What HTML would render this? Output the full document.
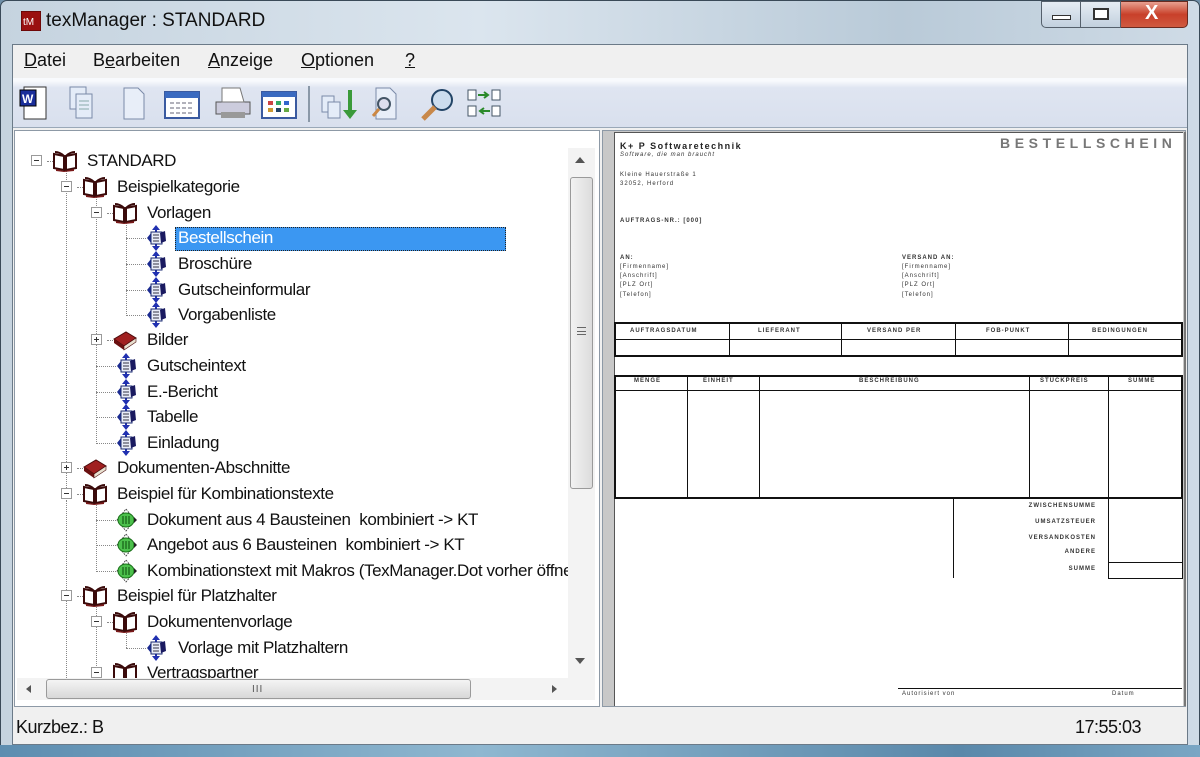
<!DOCTYPE html>
<html><head><meta charset="utf-8">
<style>
*{margin:0;padding:0;box-sizing:border-box}
body{width:1200px;height:757px;overflow:hidden;background:#6f8fa8;font-family:"Liberation Sans",sans-serif;position:relative}
.abs{position:absolute}
#frame{left:0;top:0;width:1200px;height:757px;background:linear-gradient(90deg,#c5d3df 0%,#dbe5ee 40%,#b9cad8 75%,#cfdbe6 100%);border:1px solid #3a4a58;border-radius:7px 7px 0 0}
#title{left:46px;top:10px;font-size:19px;color:#111}
#client{left:12px;top:44px;width:1176px;height:701px;background:#f0f0f0;border:1px solid #6b7a88}
.menu{top:50px;font-size:18px;color:#111}
#tb{left:13px;top:78px;width:1174px;height:50px;background:linear-gradient(#f8fafd 0,#f8fafd 6%,#dfe5f1 20%,#d9e0ee 100%);border-bottom:1px solid #9aa8b8}
#left{left:14px;top:130px;width:586px;height:577px;background:#fff;border:1px solid #8d99a6}
#right{left:602px;top:130px;width:584px;height:577px;background:#c8c8c8;border:1px solid #8d99a6}
#page{left:614px;top:132px;width:569px;height:574px;background:#fff;border-left:1px solid #555;border-top:1px solid #555}
.row{position:absolute;font-size:17px;color:#111;white-space:nowrap;letter-spacing:-0.4px;line-height:20px}
.box{position:absolute;width:11px;height:11px;border:1px solid #9a9a9a;background:#fff}
.box:before{content:"";position:absolute;left:2px;top:4px;width:5px;height:1px;background:#333}
.plus:after{content:"";position:absolute;left:4px;top:2px;width:1px;height:5px;background:#333}
.hl{position:absolute;height:0;border-top:1px dotted #888}
.vl{position:absolute;width:0;border-left:1px dotted #888}
.t{position:absolute;font-size:6px;color:#333;letter-spacing:1px;white-space:nowrap;font-weight:bold}
.ln{position:absolute;background:#111}
</style></head><body>
<svg width="0" height="0" style="position:absolute">
<defs>
<symbol id="book" viewBox="0 0 26 22"><path d="M2 4 L12 6 L12 20 L2 18Z M24 4 L14 6 L14 20 L24 18Z" fill="#fff" stroke="#3a0a0a" stroke-width="2"/><path d="M4 19 L12 21 L22 19 L22 21 L12 22 L4 21Z" fill="#7a1a1a"/><path d="M3 2 Q8 2 12 6 M23 2 Q18 2 14 6" stroke="#3a0a0a" stroke-width="2" fill="none"/></symbol>
<symbol id="cbook" viewBox="0 0 26 22"><path d="M2 10 L14 3 L24 9 L12 17Z" fill="#a02020" stroke="#4a0a0a"/><path d="M2 10 L12 17 L12 21 L2 14Z" fill="#6a1010"/><path d="M12 17 L24 9 L24 13 L12 21Z" fill="#e8e0d0" stroke="#4a0a0a" stroke-width=".6"/></symbol>
<symbol id="doc" viewBox="0 0 26 26"><path d="M13 0 L17 5 L9 5Z M13 26 L17 21 L9 21Z" fill="#2030b0"/><rect x="12" y="3" width="2" height="20" fill="#2030b0"/><path d="M4 13 L8 8 L8 18Z" fill="#1a2a90"/><rect x="8" y="7" width="11" height="12" fill="#e8ecf8" stroke="#1a2a70"/><path d="M10 10h6M10 13h6M10 16h6" stroke="#334" stroke-width="1"/><path d="M17 8 L22 6 L23 16 L18 18Z" fill="#1a1a60"/></symbol>
<symbol id="gdoc" viewBox="0 0 26 26"><path d="M13 2 L22 13 L13 24 L4 13Z" fill="none" stroke="#333" stroke-width=".8" stroke-dasharray="2 1"/><ellipse cx="13" cy="13" rx="8" ry="7" fill="#4cc04c" stroke="#1a701a"/><path d="M10 9v8M13 9v8M16 9v8" stroke="#0a4a0a"/><path d="M21 10 L24 13 L21 16Z" fill="#222"/></symbol>
</defs></svg>

<div id="frame" class="abs"></div>
<div class="abs" style="left:0;top:745px;width:1200px;height:12px;background:linear-gradient(90deg,#5d8db0,#8fb7d0 40%,#5a88aa 80%,#7aa6c4)"></div>
<svg class="abs" style="left:21px;top:11px" width="20" height="20"><rect width="20" height="20" fill="#9a1010" stroke="#400"/><text x="2" y="14" font-size="10" fill="#fff" font-family="Liberation Sans">tM</text></svg>
<div id="title" class="abs">texManager : STANDARD</div>
<div class="abs" style="left:1041px;top:1px;width:40px;height:27px;border:1px solid #55606c;border-radius:0 0 0 5px;background:linear-gradient(#e6edf4,#c2d0de)"></div>
<div class="abs" style="left:1052px;top:15px;width:19px;height:5px;border:1px solid #333;background:#fff"></div>
<div class="abs" style="left:1081px;top:1px;width:40px;height:27px;border:1px solid #55606c;border-left:none;background:linear-gradient(#e6edf4,#c2d0de)"></div>
<div class="abs" style="left:1093px;top:8px;width:16px;height:12px;border:2px solid #333;background:#fff"></div>
<div class="abs" style="left:1121px;top:1px;width:67px;height:27px;border:1px solid #6a2a20;border-left:none;border-radius:0 0 5px 0;background:linear-gradient(#e8a090,#c8402a 50%,#d05a40)"></div>
<div class="abs" style="left:1145px;top:2px;font-size:20px;font-weight:bold;color:#fff">X</div>

<div id="client" class="abs"></div>
<div class="abs menu" style="left:24px"><u>D</u>atei</div>
<div class="abs menu" style="left:93px">B<u>e</u>arbeiten</div>
<div class="abs menu" style="left:208px"><u>A</u>nzeige</div>
<div class="abs menu" style="left:301px"><u>O</u>ptionen</div>
<div class="abs menu" style="left:405px"><u>?</u></div>

<div id="tb" class="abs"></div>
<svg class="abs" style="left:18px;top:84px" width="500" height="40">
 <rect x="6" y="3" width="22" height="32" fill="#fff" stroke="#333"/><rect x="2" y="6" width="16" height="16" fill="#1a2e9a" stroke="#000"/><text x="4" y="19" font-size="12" fill="#fff" font-family="Liberation Sans" font-weight="bold">W</text>
 <rect x="52" y="3" width="16" height="22" fill="#e4ecf8" stroke="#7a8aa8"/><rect x="58" y="10" width="16" height="24" fill="#e4ecf8" stroke="#7a8aa8"/><path d="M61 17h10M61 21h10M61 25h10" stroke="#8aa"/>
 <path d="M106 4h14l6 6v25h-20Z" fill="#e8eef8" stroke="#7a8aa8"/>
 <rect x="147" y="8" width="34" height="26" fill="#fff" stroke="#3a5aa0" stroke-width="2"/><rect x="147" y="8" width="34" height="6" fill="#3a6ac0"/><path d="M152 19h24M152 24h24M152 29h24" stroke="#667" stroke-dasharray="4 2"/>
 <path d="M198 18h34v12h-34Z" fill="#ccd" stroke="#555"/><path d="M204 4h18l4 14h-22Z" fill="#fff" stroke="#777"/><rect x="203" y="28" width="24" height="6" fill="#999"/>
 <rect x="244" y="8" width="34" height="26" fill="#fff" stroke="#3a5aa0" stroke-width="2"/><rect x="244" y="8" width="34" height="5" fill="#3a6ac0"/><g fill="#c44"><rect x="250" y="17" width="5" height="4"/><rect x="258" y="17" width="5" height="4" fill="#3a6"/><rect x="266" y="17" width="5" height="4" fill="#36c"/><rect x="250" y="24" width="5" height="4" fill="#c93"/><rect x="258" y="24" width="5" height="4" fill="#246"/><rect x="266" y="24" width="5" height="4" fill="#6a4"/></g>
 <rect x="290" y="2" width="2" height="36" fill="#8a98a8"/>
 <rect x="304" y="12" width="12" height="16" fill="#e4ecf8" stroke="#7a8aa8"/><rect x="310" y="18" width="12" height="16" fill="#e4ecf8" stroke="#7a8aa8"/><path d="M330 6v20h-5l7 9 7-9h-5v-20Z" fill="#3a9a3a"/>
 <path d="M358 4h14l6 6v25h-20Z" fill="#e8eef8" stroke="#7a8aa8"/><circle cx="366" cy="20" r="6" fill="#dde" stroke="#456" stroke-width="2"/><path d="M361 25l-6 7" stroke="#c84" stroke-width="3"/>
 <circle cx="424" cy="16" r="10" fill="#cde" stroke="#246" stroke-width="2"/><path d="M417 23l-12 12" stroke="#c8884a" stroke-width="5"/>
 <g fill="#fff" stroke="#456"><rect x="450" y="6" width="8" height="10"/><rect x="474" y="6" width="8" height="10"/><rect x="450" y="22" width="8" height="10"/><rect x="474" y="22" width="8" height="10"/></g><path d="M460 11h10M466 8l4 3-4 3M472 27h-10M466 24l-4 3 4 3" stroke="#2a8a2a" stroke-width="2" fill="none"/>
</svg>

<div id="left" class="abs"></div>
<div class="abs" style="left:17px;top:146px;width:551px;height:532px;overflow:hidden">
<div style="position:absolute;left:-17px;top:-146px;width:600px;height:720px">
<div class="vl" style="left:66px;top:168px;height:330px"></div>
<div class="vl" style="left:66px;top:500px;height:180px"></div>
<div class="vl" style="left:96px;top:194px;height:250px"></div>
<div class="vl" style="left:126px;top:220px;height:96px"></div>
<div class="vl" style="left:96px;top:500px;height:72px"></div>
<div class="vl" style="left:96px;top:602px;height:80px"></div>
<div class="vl" style="left:126px;top:628px;height:20px"></div>
<div class="hl" style="left:47px;top:161px;width:6px"></div>
<div class="hl" style="left:77px;top:187px;width:6px"></div>
<div class="hl" style="left:107px;top:213px;width:6px"></div>
<div class="hl" style="left:126px;top:238px;width:20px"></div>
<div class="hl" style="left:126px;top:264px;width:20px"></div>
<div class="hl" style="left:126px;top:290px;width:20px"></div>
<div class="hl" style="left:126px;top:315px;width:20px"></div>
<div class="hl" style="left:107px;top:340px;width:6px"></div>
<div class="hl" style="left:96px;top:366px;width:20px"></div>
<div class="hl" style="left:96px;top:392px;width:20px"></div>
<div class="hl" style="left:96px;top:417px;width:20px"></div>
<div class="hl" style="left:96px;top:443px;width:20px"></div>
<div class="hl" style="left:77px;top:468px;width:6px"></div>
<div class="hl" style="left:77px;top:494px;width:6px"></div>
<div class="hl" style="left:96px;top:520px;width:20px"></div>
<div class="hl" style="left:96px;top:545px;width:20px"></div>
<div class="hl" style="left:96px;top:571px;width:20px"></div>
<div class="hl" style="left:77px;top:596px;width:6px"></div>
<div class="hl" style="left:107px;top:622px;width:6px"></div>
<div class="hl" style="left:126px;top:648px;width:20px"></div>
<div class="box" style="left:31px;top:155px"></div>
<div class="box" style="left:61px;top:181px"></div>
<div class="box" style="left:91px;top:207px"></div>
<div class="box plus" style="left:91px;top:334px"></div>
<div class="box plus" style="left:61px;top:462px"></div>
<div class="box" style="left:61px;top:488px"></div>
<div class="box" style="left:61px;top:590px"></div>
<div class="box" style="left:91px;top:616px"></div>
<div class="box" style="left:91px;top:667px"></div>
<svg class="abs" style="left:52px;top:150px" width="26" height="22"><use href="#book"/></svg>
<svg class="abs" style="left:82px;top:176px" width="26" height="22"><use href="#book"/></svg>
<svg class="abs" style="left:112px;top:202px" width="26" height="22"><use href="#book"/></svg>
<svg class="abs" style="left:112px;top:329px" width="26" height="22"><use href="#cbook"/></svg>
<svg class="abs" style="left:82px;top:457px" width="26" height="22"><use href="#cbook"/></svg>
<svg class="abs" style="left:82px;top:483px" width="26" height="22"><use href="#book"/></svg>
<svg class="abs" style="left:82px;top:585px" width="26" height="22"><use href="#book"/></svg>
<svg class="abs" style="left:112px;top:611px" width="26" height="22"><use href="#book"/></svg>
<svg class="abs" style="left:112px;top:662px" width="26" height="22"><use href="#book"/></svg>
<svg class="abs" style="left:143px;top:225px" width="26" height="26"><use href="#doc"/></svg>
<svg class="abs" style="left:143px;top:251px" width="26" height="26"><use href="#doc"/></svg>
<svg class="abs" style="left:143px;top:277px" width="26" height="26"><use href="#doc"/></svg>
<svg class="abs" style="left:143px;top:302px" width="26" height="26"><use href="#doc"/></svg>
<svg class="abs" style="left:113px;top:353px" width="26" height="26"><use href="#doc"/></svg>
<svg class="abs" style="left:113px;top:379px" width="26" height="26"><use href="#doc"/></svg>
<svg class="abs" style="left:113px;top:404px" width="26" height="26"><use href="#doc"/></svg>
<svg class="abs" style="left:113px;top:430px" width="26" height="26"><use href="#doc"/></svg>
<svg class="abs" style="left:113px;top:507px" width="26" height="26"><use href="#gdoc"/></svg>
<svg class="abs" style="left:113px;top:532px" width="26" height="26"><use href="#gdoc"/></svg>
<svg class="abs" style="left:113px;top:558px" width="26" height="26"><use href="#gdoc"/></svg>
<svg class="abs" style="left:143px;top:635px" width="26" height="26"><use href="#doc"/></svg>
<div class="abs" style="left:175px;top:227px;width:331px;height:24px;background:#3b97f2;border:1px dotted #222"></div>
<div class="row" style="left:87px;top:151px">STANDARD</div>
<div class="row" style="left:117px;top:177px">Beispielkategorie</div>
<div class="row" style="left:147px;top:203px">Vorlagen</div>
<div class="row" style="left:178px;top:228px;color:#fff">Bestellschein</div>
<div class="row" style="left:178px;top:254px">Broschüre</div>
<div class="row" style="left:178px;top:280px">Gutscheinformular</div>
<div class="row" style="left:178px;top:305px">Vorgabenliste</div>
<div class="row" style="left:147px;top:330px">Bilder</div>
<div class="row" style="left:147px;top:356px">Gutscheintext</div>
<div class="row" style="left:147px;top:382px">E.-Bericht</div>
<div class="row" style="left:147px;top:407px">Tabelle</div>
<div class="row" style="left:147px;top:433px">Einladung</div>
<div class="row" style="left:117px;top:458px">Dokumenten-Abschnitte</div>
<div class="row" style="left:117px;top:484px">Beispiel für Kombinationstexte</div>
<div class="row" style="left:147px;top:510px">Dokument aus 4 Bausteinen &nbsp;kombiniert -&gt; KT</div>
<div class="row" style="left:147px;top:535px">Angebot aus 6 Bausteinen &nbsp;kombiniert -&gt; KT</div>
<div class="row" style="left:147px;top:561px">Kombinationstext mit Makros (TexManager.Dot vorher öffnen)</div>
<div class="row" style="left:117px;top:586px">Beispiel für Platzhalter</div>
<div class="row" style="left:147px;top:612px">Dokumentenvorlage</div>
<div class="row" style="left:178px;top:638px">Vorlage mit Platzhaltern</div>
<div class="row" style="left:147px;top:663px">Vertragspartner</div>
</div></div>
<div class="abs" style="left:568px;top:148px;width:27px;height:530px;background:#f3f3f3"></div>
<div class="abs" style="left:575px;top:157px;width:0;height:0;border:5px solid transparent;border-bottom:6px solid #555;border-top:none"></div>
<div class="abs" style="left:570px;top:177px;width:23px;height:312px;background:linear-gradient(90deg,#f2f2f2,#dcdcdc);border:1px solid #9a9a9a;border-radius:3px"></div>
<div class="abs" style="left:577px;top:327px;width:9px;height:8px;border-top:1px solid #666;border-bottom:1px solid #666"></div>
<div class="abs" style="left:577px;top:331px;width:9px;height:1px;background:#666"></div>
<div class="abs" style="left:575px;top:658px;width:0;height:0;border:5px solid transparent;border-top:6px solid #555;border-bottom:none"></div>
<div class="abs" style="left:17px;top:678px;width:578px;height:22px;background:#f3f3f3"></div>
<div class="abs" style="left:26px;top:685px;width:0;height:0;border:4px solid transparent;border-right:5px solid #555;border-left:none"></div>
<div class="abs" style="left:46px;top:679px;width:425px;height:20px;background:linear-gradient(#f4f4f4,#d8d8d8);border:1px solid #9a9a9a;border-radius:3px"></div>
<div class="abs" style="left:252px;top:684px;font-size:10px;color:#555;letter-spacing:1px">III</div>
<div class="abs" style="left:552px;top:685px;width:0;height:0;border:4px solid transparent;border-left:5px solid #555;border-right:none"></div>

<div id="right" class="abs"></div>
<div id="page" class="abs"></div>
<div class="abs" style="left:1184px;top:132px;width:2px;height:574px;background:#777"></div>
<div class="t" style="left:620px;top:141px;font-size:9px;letter-spacing:1.5px;color:#222">K+ P Softwaretechnik</div>
<div class="t" style="left:620px;top:152px;font-style:italic;font-weight:normal">Software, die man braucht</div>
<div class="t" style="left:620px;top:172px;font-weight:normal">Kleine Hauerstraße 1</div>
<div class="t" style="left:620px;top:181px;font-weight:normal">32052, Herford</div>
<div class="t" style="left:1000px;top:135px;font-size:14px;letter-spacing:4.6px;color:#777">BESTELLSCHEIN</div>
<div class="t" style="left:620px;top:218px">AUFTRAGS-NR.: [000]</div>
<div class="t" style="left:620px;top:255px">AN:</div>
<div class="t" style="left:620px;top:264px;font-weight:normal">[Firmenname]</div>
<div class="t" style="left:620px;top:273px;font-weight:normal">[Anschrift]</div>
<div class="t" style="left:620px;top:282px;font-weight:normal">[PLZ Ort]</div>
<div class="t" style="left:620px;top:292px;font-weight:normal">[Telefon]</div>
<div class="t" style="left:902px;top:255px">VERSAND AN:</div>
<div class="t" style="left:902px;top:264px;font-weight:normal">[Firmenname]</div>
<div class="t" style="left:902px;top:273px;font-weight:normal">[Anschrift]</div>
<div class="t" style="left:902px;top:282px;font-weight:normal">[PLZ Ort]</div>
<div class="t" style="left:902px;top:292px;font-weight:normal">[Telefon]</div>
<div class="abs" style="left:614px;top:322px;width:569px;height:35px;border:2px solid #111"></div>
<div class="ln" style="left:614px;top:339px;width:569px;height:1px"></div>
<div class="ln" style="left:729px;top:322px;width:1px;height:35px"></div>
<div class="ln" style="left:841px;top:322px;width:1px;height:35px"></div>
<div class="ln" style="left:955px;top:322px;width:1px;height:35px"></div>
<div class="ln" style="left:1068px;top:322px;width:1px;height:35px"></div>
<div class="t" style="left:630px;top:328px">AUFTRAGSDATUM</div>
<div class="t" style="left:758px;top:328px">LIEFERANT</div>
<div class="t" style="left:867px;top:328px">VERSAND PER</div>
<div class="t" style="left:986px;top:328px">FOB-PUNKT</div>
<div class="t" style="left:1092px;top:328px">BEDINGUNGEN</div>
<div class="abs" style="left:614px;top:375px;width:569px;height:124px;border:2px solid #111"></div>
<div class="ln" style="left:614px;top:390px;width:569px;height:1px"></div>
<div class="ln" style="left:687px;top:375px;width:1px;height:124px"></div>
<div class="ln" style="left:759px;top:375px;width:1px;height:124px"></div>
<div class="ln" style="left:1029px;top:375px;width:1px;height:124px"></div>
<div class="ln" style="left:1108px;top:375px;width:1px;height:124px"></div>
<div class="t" style="left:634px;top:378px">MENGE</div>
<div class="t" style="left:703px;top:378px">EINHEIT</div>
<div class="t" style="left:859px;top:378px">BESCHREIBUNG</div>
<div class="t" style="left:1040px;top:378px">STÜCKPREIS</div>
<div class="t" style="left:1128px;top:378px">SUMME</div>
<div class="ln" style="left:953px;top:498px;width:1px;height:80px"></div>
<div class="abs" style="left:1108px;top:498px;width:75px;height:81px;border:1px solid #111;border-top:none"></div>
<div class="ln" style="left:1108px;top:562px;width:75px;height:1px"></div>
<div class="t" style="left:1010px;top:503px;width:86px;text-align:right">ZWISCHENSUMME</div>
<div class="t" style="left:1010px;top:519px;width:86px;text-align:right">UMSATZSTEUER</div>
<div class="t" style="left:1010px;top:535px;width:86px;text-align:right">VERSANDKOSTEN</div>
<div class="t" style="left:1010px;top:549px;width:86px;text-align:right">ANDERE</div>
<div class="t" style="left:1010px;top:566px;width:86px;text-align:right">SUMME</div>
<div class="ln" style="left:898px;top:688px;width:284px;height:1px"></div>
<div class="t" style="left:902px;top:691px;font-weight:normal">Autorisiert von</div>
<div class="t" style="left:1112px;top:691px;font-weight:normal">Datum</div>

<div class="abs" style="left:16px;top:717px;font-size:18px;color:#111;letter-spacing:-0.5px">Kurzbez.: B</div>
<div class="abs" style="left:1075px;top:717px;font-size:18px;color:#111;letter-spacing:-0.5px">17:55:03</div>
</body></html>
